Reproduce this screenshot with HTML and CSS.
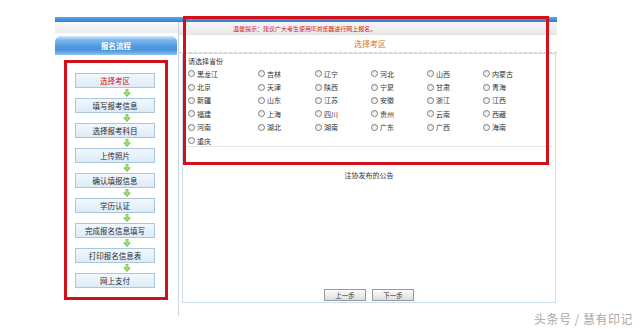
FILE: index.html
```html
<!DOCTYPE html>
<html lang="zh-CN">
<head>
<meta charset="utf-8">
<title>报名流程 - 选择考区</title>
<link rel="stylesheet" href="styles.css">
</head>
<body>
<div class="page">
  <div class="topbar"></div>
  <div class="main">
    <aside class="side">
      <div class="side-band"></div>
      <div class="side-head">报名流程</div>
      <ol class="steps">
        <li class="step current">选择考区</li>
        <li class="arrow"><svg width="8" height="8" viewBox="0 0 8 8"><path d="M2.6 0h2.8v3.6H8L4 8 0 3.6h2.6z" fill="#6cbf3a"/><path d="M3.2 0.6h1.6v3.6h1.6L4 6.8 1.6 4.2h1.6z" fill="#a6df7c"/></svg></li>
        <li class="step">填写报考信息</li>
        <li class="arrow"><svg width="8" height="8" viewBox="0 0 8 8"><path d="M2.6 0h2.8v3.6H8L4 8 0 3.6h2.6z" fill="#6cbf3a"/><path d="M3.2 0.6h1.6v3.6h1.6L4 6.8 1.6 4.2h1.6z" fill="#a6df7c"/></svg></li>
        <li class="step">选择报考科目</li>
        <li class="arrow"><svg width="8" height="8" viewBox="0 0 8 8"><path d="M2.6 0h2.8v3.6H8L4 8 0 3.6h2.6z" fill="#6cbf3a"/><path d="M3.2 0.6h1.6v3.6h1.6L4 6.8 1.6 4.2h1.6z" fill="#a6df7c"/></svg></li>
        <li class="step">上传照片</li>
        <li class="arrow"><svg width="8" height="8" viewBox="0 0 8 8"><path d="M2.6 0h2.8v3.6H8L4 8 0 3.6h2.6z" fill="#6cbf3a"/><path d="M3.2 0.6h1.6v3.6h1.6L4 6.8 1.6 4.2h1.6z" fill="#a6df7c"/></svg></li>
        <li class="step">确认填报信息</li>
        <li class="arrow"><svg width="8" height="8" viewBox="0 0 8 8"><path d="M2.6 0h2.8v3.6H8L4 8 0 3.6h2.6z" fill="#6cbf3a"/><path d="M3.2 0.6h1.6v3.6h1.6L4 6.8 1.6 4.2h1.6z" fill="#a6df7c"/></svg></li>
        <li class="step">学历认证</li>
        <li class="arrow"><svg width="8" height="8" viewBox="0 0 8 8"><path d="M2.6 0h2.8v3.6H8L4 8 0 3.6h2.6z" fill="#6cbf3a"/><path d="M3.2 0.6h1.6v3.6h1.6L4 6.8 1.6 4.2h1.6z" fill="#a6df7c"/></svg></li>
        <li class="step">完成报名信息填写</li>
        <li class="arrow"><svg width="8" height="8" viewBox="0 0 8 8"><path d="M2.6 0h2.8v3.6H8L4 8 0 3.6h2.6z" fill="#6cbf3a"/><path d="M3.2 0.6h1.6v3.6h1.6L4 6.8 1.6 4.2h1.6z" fill="#a6df7c"/></svg></li>
        <li class="step">打印报名信息表</li>
        <li class="arrow"><svg width="8" height="8" viewBox="0 0 8 8"><path d="M2.6 0h2.8v3.6H8L4 8 0 3.6h2.6z" fill="#6cbf3a"/><path d="M3.2 0.6h1.6v3.6h1.6L4 6.8 1.6 4.2h1.6z" fill="#a6df7c"/></svg></li>
        <li class="step">网上支付</li>
      </ol>
    </aside>
    <section class="content">
      <div class="notice">温馨提示：建议广大考生使用IE浏览器进行网上报名。</div>
      <div class="title">选择考区</div>
      <div class="panel">
        <div class="prov">
          <div class="legend">请选择省份</div>
          <div class="grid">
            <label class="opt"><span class="radio"></span>黑龙江</label>
            <label class="opt"><span class="radio"></span>吉林</label>
            <label class="opt"><span class="radio"></span>辽宁</label>
            <label class="opt"><span class="radio"></span>河北</label>
            <label class="opt"><span class="radio"></span>山西</label>
            <label class="opt"><span class="radio"></span>内蒙古</label>
            <label class="opt"><span class="radio"></span>北京</label>
            <label class="opt"><span class="radio"></span>天津</label>
            <label class="opt"><span class="radio"></span>陕西</label>
            <label class="opt"><span class="radio"></span>宁夏</label>
            <label class="opt"><span class="radio"></span>甘肃</label>
            <label class="opt"><span class="radio"></span>青海</label>
            <label class="opt"><span class="radio"></span>新疆</label>
            <label class="opt"><span class="radio"></span>山东</label>
            <label class="opt"><span class="radio"></span>江苏</label>
            <label class="opt"><span class="radio"></span>安徽</label>
            <label class="opt"><span class="radio"></span>浙江</label>
            <label class="opt"><span class="radio"></span>江西</label>
            <label class="opt"><span class="radio"></span>福建</label>
            <label class="opt"><span class="radio"></span>上海</label>
            <label class="opt"><span class="radio"></span>四川</label>
            <label class="opt"><span class="radio"></span>贵州</label>
            <label class="opt"><span class="radio"></span>云南</label>
            <label class="opt"><span class="radio"></span>西藏</label>
            <label class="opt"><span class="radio"></span>河南</label>
            <label class="opt"><span class="radio"></span>湖北</label>
            <label class="opt"><span class="radio"></span>湖南</label>
            <label class="opt"><span class="radio"></span>广东</label>
            <label class="opt"><span class="radio"></span>广西</label>
            <label class="opt"><span class="radio"></span>海南</label>
            <label class="opt"><span class="radio"></span>重庆</label>
          </div>
        </div>
        <div class="announce">注协发布的公告</div>
        <div class="buttons">
          <button class="btn">上一步</button>
          <button class="btn">下一步</button>
        </div>
      </div>
    </section>
  </div>
  <div class="mark mark-left"></div>
  <div class="mark mark-right"></div>
</div>
<div class="watermark">头条号 / 慧有印记</div>
</body>
</html>
```
FILE: styles.css
```css
html, body {
  margin: 0;
  padding: 0;
  background: #ffffff;
}
body {
  width: 640px;
  height: 329px;
  position: relative;
  overflow: hidden;
  font-family: "Noto Sans CJK SC", "Noto Sans", sans-serif;
  color: #333;
}
.page {
  position: relative;
  width: 502px;
  margin-left: 55px;
  padding-top: 17px;
}
.topbar {
  height: 5px;
  background: linear-gradient(#5ea6ea, #2d7dcf);
}
.main {
  display: flex;
  align-items: flex-start;
}
.side {
  width: 123px;
  height: 294px;
  border-right: 1px solid #c9d5e1;
  flex: none;
}
.side-band {
  height: 11px;
  background: linear-gradient(#fafafa, #e9ebee);
}
.side-head {
  margin-top: 3px;
  width: 122px;
  height: 19px;
  line-height: 19px;
  text-align: center;
  color: #fff;
  font-weight: bold;
  font-size: 7.5px;
  border-radius: 6px 6px 0 0;
  background: linear-gradient(#d5e9fb 0%, #7ab7ee 22%, #4f98de 55%, #4a93da 75%, #8cc3f2 100%);
}
.steps {
  list-style: none;
  margin: 0;
  padding: 18px 0 0 20px;
}
.step {
  width: 80px;
  height: 15px;
  box-sizing: border-box;
  border: 1px solid #a9c6de;
  background: linear-gradient(#f1f8fd, #dcebf7);
  text-align: center;
  font-size: 7.5px;
  line-height: 13px;
  color: #2a2a2a;
}
.step.current {
  color: #d01818;
}
.arrow {
  height: 10px;
  display: flex;
  align-items: center;
  justify-content: center;
}
.arrow svg {
  display: block;
}
.content {
  flex: 1;
}
.notice {
  height: 13px;
  line-height: 13px;
  padding-left: 54px;
  font-size: 6px;
  color: #d42020;
  background: linear-gradient(#f6f6f6, #e8e8e8);
  border-bottom: 1px solid #e2e2e2;
  box-sizing: border-box;
}
.title {
  height: 17px;
  line-height: 17px;
  text-align: center;
  font-size: 8px;
  color: #dc7428;
  border-bottom: 1px dashed #cfcfcf;
  padding-left: 4px;
}
.panel {
  margin-left: 3px;
  width: 374px;
  height: 250px;
  box-sizing: border-box;
  border: 1px solid #cfdeec;
  display: flex;
  flex-direction: column;
}
.prov {
  margin: 0 2px;
  padding: 1px 3px 1px;
  border-bottom: 1px solid #e6e6e6;
  height: 93px;
  box-sizing: border-box;
}
.legend {
  height: 12px;
  line-height: 12px;
  font-size: 7px;
  color: #333;
}
.grid {
  display: grid;
  grid-template-columns: 70px 57px 56px 56px 56px auto;
  grid-auto-rows: 13.4px;
}
.opt {
  display: flex;
  align-items: center;
  gap: 2px;
  font-size: 7px;
  color: #333;
}
.radio {
  width: 7px;
  height: 7px;
  box-sizing: border-box;
  border: 1px solid #7a7a7a;
  border-radius: 50%;
  background: linear-gradient(#e8e8e8, #ffffff);
  flex: none;
}
.announce {
  padding-top: 22px;
  height: 12px;
  line-height: 12px;
  text-align: center;
  font-size: 7px;
  color: #333;
}
.buttons {
  margin-top: auto;
  padding-bottom: 1px;
  display: flex;
  justify-content: center;
  gap: 6px;
}
.btn {
  width: 42px;
  height: 12px;
  padding: 0;
  font-family: inherit;
  font-size: 6.5px;
  line-height: 10px;
  color: #333;
  border: 1px solid #9a9a9a;
  background: linear-gradient(#fbfbfb, #dedede);
  border-radius: 0;
}
.mark {
  position: absolute;
  border: 3px solid #d2101c;
  box-sizing: border-box;
}
.mark-left {
  left: 9px;
  top: 60px;
  width: 104px;
  height: 240px;
}
.mark-right {
  left: 128px;
  top: 16px;
  width: 366px;
  height: 149px;
}
.watermark {
  position: absolute;
  right: 7px;
  bottom: 2px;
  font-size: 12px;
  color: #a8a8a8;
  font-family: "Noto Sans CJK SC", sans-serif;
  letter-spacing: 0.5px;
}
```
